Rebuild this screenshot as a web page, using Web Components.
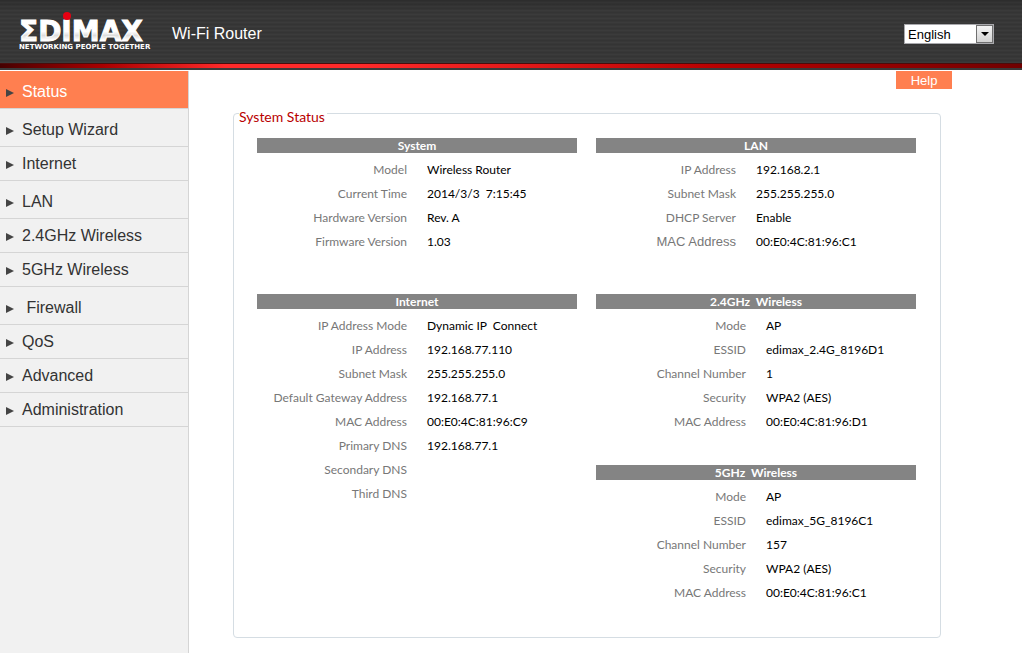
<!DOCTYPE html>
<html lang="en">
<head>
<meta charset="utf-8">
<meta name="viewport" content="width=device-width, initial-scale=1">
<title>Wi-Fi Router</title>
<style>
  body { margin: 0; background: #fff; font-family: "Liberation Sans", Arial, sans-serif; }
</style>
</head>
<body>
<router-page>
  <router-header slot="header">Wi-Fi Router</router-header>
  <router-menu slot="menu">
    <menu-item group active>Status</menu-item>
    <menu-item group>Setup Wizard</menu-item>
    <menu-item>Internet</menu-item>
    <menu-item group>LAN</menu-item>
    <menu-item>2.4GHz Wireless</menu-item>
    <menu-item>5GHz Wireless</menu-item>
    <menu-item group>&nbsp;Firewall</menu-item>
    <menu-item>QoS</menu-item>
    <menu-item>Advanced</menu-item>
    <menu-item>Administration</menu-item>
  </router-menu>
  <help-button>Help</help-button>
  <status-group legend="System Status">
    <status-panel section="system"></status-panel>
    <status-panel section="lan" narrow></status-panel>
    <status-panel section="internet"></status-panel>
    <panel-stack>
      <status-panel section="wireless24"></status-panel>
      <status-panel section="wireless5"></status-panel>
    </panel-stack>
  </status-group>
</router-page>

<script>
const SECTIONS = {
  system: { title: "System", rows: [
    ["Model", "Wireless Router"],
    ["Current Time", "2014/3/3\u00a0 7:15:45"],
    ["Hardware Version", "Rev. A"],
    ["Firmware Version", "1.03"]] },
  lan: { title: "LAN", rows: [
    ["IP Address", "192.168.2.1"],
    ["Subnet Mask", "255.255.255.0"],
    ["DHCP Server", "Enable"],
    ["MAC Address", "00:E0:4C:81:96:C1", "plain"]] },
  internet: { title: "Internet", rows: [
    ["IP Address Mode", "Dynamic IP\u00a0 Connect"],
    ["IP Address", "192.168.77.110"],
    ["Subnet Mask", "255.255.255.0"],
    ["Default Gateway Address", "192.168.77.1"],
    ["MAC Address", "00:E0:4C:81:96:C9"],
    ["Primary DNS", "192.168.77.1"],
    ["Secondary DNS", ""],
    ["Third DNS", ""]] },
  wireless24: { title: "2.4GHz\u00a0 Wireless", rows: [
    ["Mode", "AP"],
    ["ESSID", "edimax_2.4G_8196D1"],
    ["Channel Number", "1"],
    ["Security", "WPA2 (AES)"],
    ["MAC Address", "00:E0:4C:81:96:D1"]] },
  wireless5: { title: "5GHz\u00a0 Wireless", rows: [
    ["Mode", "AP"],
    ["ESSID", "edimax_5G_8196C1"],
    ["Channel Number", "157"],
    ["Security", "WPA2 (AES)"],
    ["MAC Address", "00:E0:4C:81:96:C1"]] }
};

class Base extends HTMLElement {
  constructor() {
    super();
    this.attachShadow({ mode: "open" }).innerHTML = this.constructor.markup;
  }
}

customElements.define("router-page", class extends Base {
  static markup = `
    <style>
      :host { display: flex; flex-direction: column; min-height: 100vh; }
      .body { display: flex; flex: 1; }
      nav { flex: none; display: flex; }
      main { flex: 1; min-width: 0; display: flex; flex-direction: column; }
    </style>
    <slot name="header"></slot>
    <div class="body">
      <nav><slot name="menu"></slot></nav>
      <main><slot></slot></main>
    </div>`;
});

customElements.define("router-header", class extends Base {
  static markup = `
    <style>
      :host { display: block; padding-bottom: 1px; }
      header {
        display: flex; align-items: center; height: 63px; padding: 0 28px 0 19px; box-sizing: border-box;
        background:
          linear-gradient(rgba(0,0,0,.15), rgba(0,0,0,0) 12px),
          repeating-linear-gradient(#343434 0 1px, #373737 1px 2px, #3b3b3b 2px 3px, #373737 3px 4px);
      }
      .rule {
        height: 4px; border-top: 1px solid #4a0c0c; border-bottom: 2px solid #3a3a3a;
        background: linear-gradient(90deg, #400 0, #5c0000 2%, #a80000 10%, #ff2a2a 22%, #ff2a2a 35%, #e51a1a 50%, #b80000 70%, #8c0000 90%, #700000 100%);
      }
      svg { flex: none; width: 132px; height: 63px; }
      .title { margin-left: 21px; font-size: 16px; line-height: 20px; color: #fff; padding-top: 4px; }
      label { position: relative; display: block; margin-left: auto; padding-top: 5px; }
      select {
        appearance: none; display: block; box-sizing: border-box; width: 90px; height: 20px; margin: 0; padding: 0 18px 0 3px;
        border: 1px solid #a9a9ad; border-radius: 0; background: #fff; color: #000;
        font: 13px "Liberation Sans", Arial, sans-serif;
      }
      .arrow {
        position: absolute; right: 1px; bottom: 1px; width: 17px; height: 18px; box-sizing: border-box;
        border: 1px solid #707070; background: linear-gradient(#f4f4f4, #d2d2d2); pointer-events: none;
        display: flex; align-items: center; justify-content: center;
      }
      .arrow::before { content: ""; border: 4px solid transparent; border-top-color: #000; border-bottom: 0; }
    </style>
    <header>
      <svg viewBox="0 0 132 63" role="img" aria-label="Edimax">
        <defs>
          <linearGradient id="shine" x1="0" y1="0" x2="0" y2="1">
            <stop offset=".5" stop-color="#fff"/><stop offset=".62" stop-color="#ddd"/><stop offset=".75" stop-color="#fff"/>
          </linearGradient>
        </defs>
        <text x="0" y="41" font-family="DejaVu Sans" font-weight="700" font-size="28" fill="url(#shine)" stroke="#fff" stroke-width="1">ΣDIMAX</text>
        <circle cx="48" cy="16" r="4" fill="#e60012"/>
        <text x="0" y="49" font-family="DejaVu Sans" font-weight="700" font-size="7" fill="#fff">NETWORKING PEOPLE TOGETHER</text>
      </svg>
      <div class="title"><slot></slot></div>
      <label><select aria-label="Language"><option>English</option></select><span class="arrow"></span></label>
    </header>
    <div class="rule"></div>`;
});

customElements.define("router-menu", class extends Base {
  static markup = `
    <style>
      :host { display: block; width: 188px; background: #f1f1f1; border-right: 1px solid #d5d5d5; }
    </style>
    <slot></slot>`;
});

customElements.define("menu-item", class extends Base {
  static markup = `
    <style>
      :host { display: block; border-bottom: 1px solid #d5d5d5; color: #333; }
      :host([group]) { padding-top: 4px; }
      :host([active]) { background: #ff7f50; color: #fff; }
      a { display: flex; align-items: center; height: 33px; padding-left: 6px; color: inherit; text-decoration: none; font-size: 16px; line-height: 20px; }
      svg { flex: none; width: 8px; height: 8px; margin: 2px 8px 0 0; }
    </style>
    <a href="#"><svg viewBox="0 0 8 8" aria-hidden="true"><path d="M0 0 8 4 0 8z" fill="#444"/></svg><span><slot></slot></span></a>`;
});

customElements.define("help-button", class extends Base {
  static markup = `
    <style>
      :host { display: flex; justify-content: flex-end; padding-right: 70px; }
      button {
        width: 56px; height: 18px; padding: 2px 0 0; border: 0; background: #ff7f50; color: #fff; cursor: pointer;
        font: 13px/16px "Liberation Sans", Arial, sans-serif;
      }
    </style>
    <button type="button"><slot></slot></button>`;
});

customElements.define("status-group", class extends Base {
  static markup = `
    <style>
      :host { display: block; padding: 11px 81px 15px 44px; font-family: Lato, Calibri, sans-serif; }
      fieldset { margin: 0; min-width: 0; padding: 12px 24px 32px 23px; border: 1px solid #d5dde3; border-radius: 4px; }
      legend { margin-left: -18px; padding: 8px 2px 0 0; font-size: 14px; line-height: 18px; color: #b90000; }
      .grid { display: grid; grid-template-columns: 1fr 1fr; gap: 40px 19px; align-items: start; }
    </style>
    <fieldset><legend></legend><div class="grid"><slot></slot></div></fieldset>`;
  connectedCallback() {
    this.shadowRoot.querySelector("legend").textContent = this.getAttribute("legend");
  }
});

customElements.define("panel-stack", class extends Base {
  static markup = `<style>:host { display: grid; gap: 31px; }</style><slot></slot>`;
});

customElements.define("status-panel", class extends Base {
  static markup = `
    <style>
      :host { display: block; --label: 150px; }
      :host([narrow]) { --label: 140px; }
      table { width: 100%; border-collapse: collapse; table-layout: fixed; font-size: 12px; line-height: 15px; }
      caption { height: 15px; margin-bottom: 5px; background: #848484; color: #fff; font-weight: 700; }
      th, td { height: 22px; padding: 0 0 2px; text-align: left; white-space: nowrap; }
      th { width: var(--label); font-weight: 400; text-align: right; color: #777; }
      td { padding-left: 20px; color: #000; }
      .plain { font-family: "Liberation Sans", Arial, sans-serif; font-size: 13px; }
    </style>
    <table><caption></caption><tbody></tbody></table>`;
  connectedCallback() {
    const { title, rows } = SECTIONS[this.getAttribute("section")];
    this.shadowRoot.querySelector("caption").textContent = title;
    const body = this.shadowRoot.querySelector("tbody");
    for (const [label, value, style] of rows) {
      const row = body.insertRow();
      const head = document.createElement("th");
      head.scope = "row";
      head.textContent = label;
      if (style) head.className = style;
      row.append(head);
      row.insertCell().textContent = value;
    }
  }
});
</script>
</body>
</html>
